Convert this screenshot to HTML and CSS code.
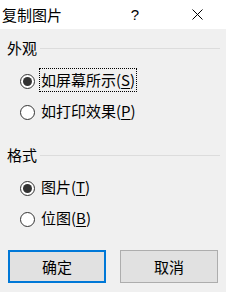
FILE: index.html
```html
<!DOCTYPE html>
<html lang="zh-CN">
<head>
    <meta charset="UTF-8">
    <title>复制图片</title>
    <link rel="stylesheet" href="styles.css">
</head>
<body>
    <div class="dialog">
        <div class="titlebar">
            <span class="title">复制图片</span>
            <span class="help">?</span>
            <span class="close">
                <svg width="11" height="11" viewBox="0 0 11 11"><path d="M0.5 0.5 L10.5 10.5 M10.5 0.5 L0.5 10.5" stroke="#000" stroke-width="1" fill="none"/></svg>
            </span>
        </div>

        <div class="group first">
            <div class="group-head"><span>外观</span><div class="rule"></div></div>
            <div class="options">
                <div class="option">
                    <span class="radio checked"></span>
                    <span class="label focus">如屏幕所示(<u>S</u>)</span>
                </div>
                <div class="option">
                    <span class="radio"></span>
                    <span class="label">如打印效果(<u>P</u>)</span>
                </div>
            </div>
        </div>

        <div class="group second">
            <div class="group-head"><span>格式</span><div class="rule"></div></div>
            <div class="options">
                <div class="option">
                    <span class="radio checked"></span>
                    <span class="label">图片(<u>T</u>)</span>
                </div>
                <div class="option">
                    <span class="radio"></span>
                    <span class="label">位图(<u>B</u>)</span>
                </div>
            </div>
        </div>

        <div class="buttons">
            <button class="btn default">确定</button>
            <button class="btn">取消</button>
        </div>
    </div>
</body>
</html>
```

FILE: styles.css
```css
body {
    margin: 0;
    background: #f0f0f0;
    font-family: "Noto Sans CJK SC", "Noto Sans", sans-serif;
    font-size: 15px;
    color: #000;
}
.dialog {
    width: 226px;
    height: 292px;
}
.titlebar {
    height: 29px;
    background: #fff;
    display: flex;
    align-items: center;
}
.title {
    padding-left: 2px;
    flex: 1;
    line-height: 20px;
}
.help {
    width: 12px;
    text-align: center;
    margin-right: 51px;
    font-family: "Liberation Sans", sans-serif;
    font-size: 15px;
}
.close {
    width: 11px;
    height: 11px;
    margin-right: 23px;
    display: flex;
}
.group {
    padding: 0 6px 0 7px;
}
.group.first {
    margin-top: 9px;
}
.group.second {
    margin-top: 22px;
}
.group-head {
    display: flex;
    align-items: center;
    height: 20px;
    line-height: 20px;
    margin-bottom: 10px;
}
.rule {
    flex: 1;
    height: 1px;
    background: #dcdcdc;
    margin-left: 3px;
}
.options {
    display: flex;
    flex-direction: column;
    gap: 7px;
}
.option {
    display: flex;
    align-items: center;
    height: 24px;
    padding-left: 13px;
}
.radio {
    box-sizing: border-box;
    flex-shrink: 0;
    width: 15px;
    height: 15px;
    border: 1px solid #333;
    border-radius: 50%;
    background: #fff;
    position: relative;
    margin: 3px 4px 0 0;
}
.radio.checked::after {
    content: "";
    position: absolute;
    left: 2px;
    top: 2px;
    width: 9px;
    height: 9px;
    border-radius: 50%;
    background: #333;
}
.label {
    line-height: 22px;
    padding: 0 1px;
    border: 1px dotted transparent;
}
.label.focus {
    border-color: #000;
}
.label u {
    text-underline-offset: 2px;
}
.buttons {
    display: flex;
    gap: 14px;
    padding: 0 8px;
    margin-top: 20px;
}
.btn {
    width: 98px;
    height: 33px;
    background: #e1e1e1;
    border: 1px solid #adadad;
    font-family: "Noto Sans CJK SC", sans-serif;
    font-size: 15px;
    color: #000;
    padding: 0;
}
.btn.default {
    border: 2px solid #0078d7;
}
```
